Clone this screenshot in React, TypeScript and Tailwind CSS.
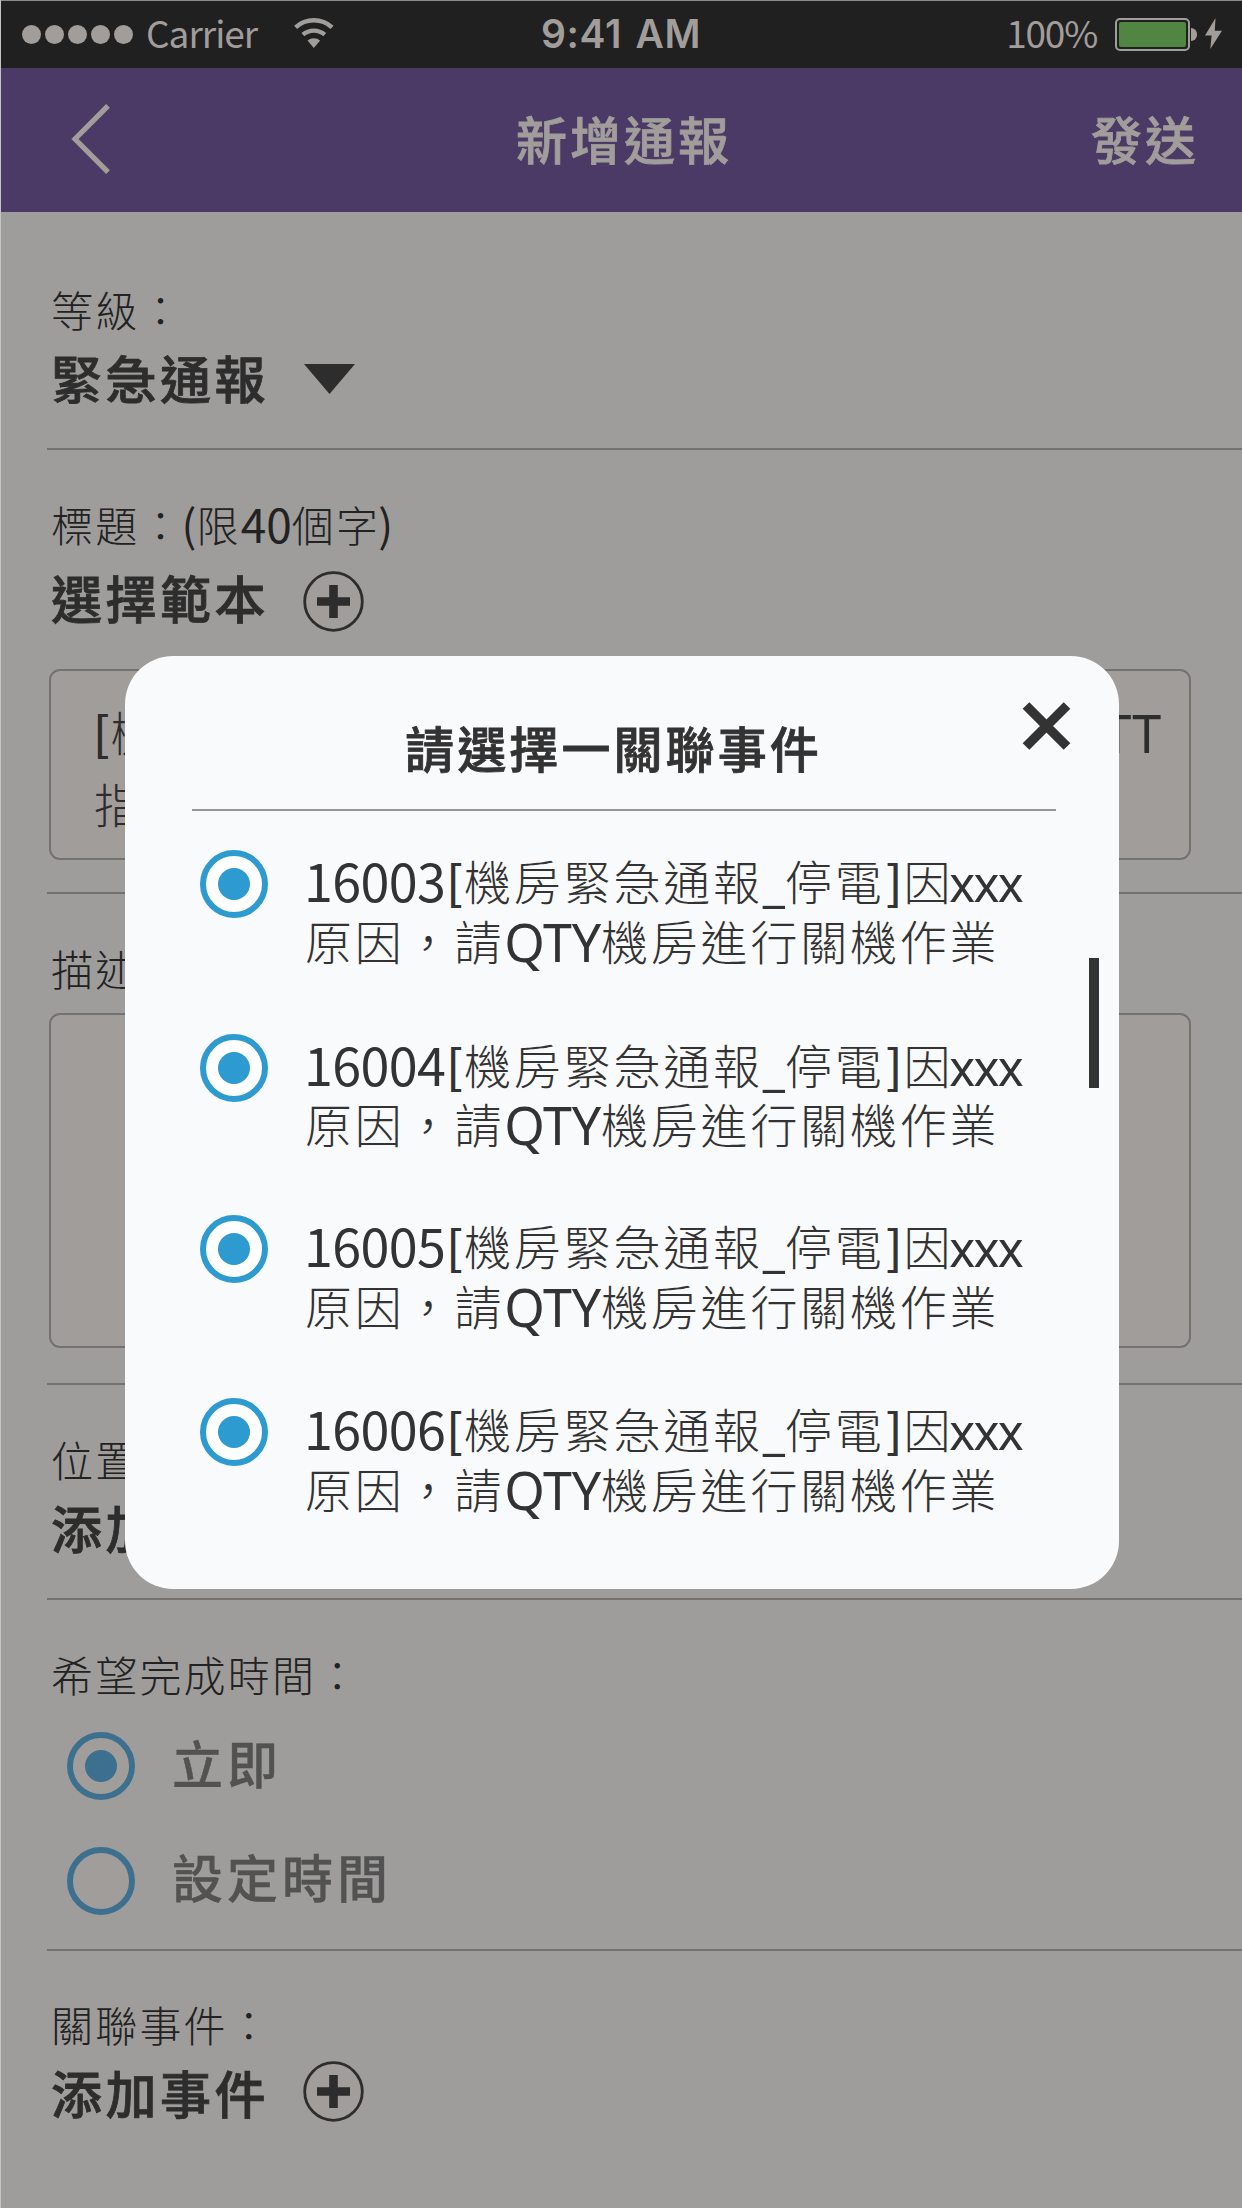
import React from "react";

const cjk = "font-['Noto_Sans_CJK_TC',sans-serif]";

/* Splits a string so that digits and Latin letters get their own size. */
function Mixed({ text, small = false }: { text: string; small?: boolean }) {
  const parts = text.match(/[0-9]+|[A-Z]+|[a-z]+|[\[\]()]|_|[^\x00-\x7f]+/g) ?? [];
  return (
    <>
      {parts.map((p, i) => {
        if (/^[0-9]/.test(p))
          return (
            <span key={i} className={small ? "align-[-1px] text-[46px] font-normal tracking-[0px]" : "align-[-2px] text-[52px] font-normal tracking-[-0.6px]"}>
              {p}
            </span>
          );
        if (/^[A-Z]/.test(p))
          return (
            <span key={i} className="align-[-2px] font-['Noto_Sans',sans-serif] text-[52px] font-normal tracking-[-0.2px]">
              {p}
            </span>
          );
        if (/^[a-z]/.test(p))
          return (
            <span key={i} className="ml-[-4px] align-[-2px] font-['Noto_Sans',sans-serif] text-[49px] font-normal tracking-[-1.600px]">
              {p}
            </span>
          );
        if (p === "_")
          return (
            <span key={i} className="align-[-1px] font-['Noto_Sans',sans-serif] text-[50px] font-normal tracking-[0px]">
              {p}
            </span>
          );
        if (/^[\[\]()]/.test(p))
          return (
            <span key={i} className={small ? "ml-[-2px] text-[44px] font-normal tracking-[0px]" : "px-[1px] text-[47px] font-medium tracking-[0px]"}>
              {p}
            </span>
          );
        return <span key={i}>{p}</span>;
      })}
    </>
  );
}

function Label({ children }: { children: string }) {
  return (
    <div className="h-[60px] pl-[4px] text-[42px] leading-[60px] font-light tracking-[2.2px] whitespace-nowrap text-[#222222]">
      <Mixed text={children} small />
    </div>
  );
}

function Heading({ children, icon }: { children: string; icon: React.ReactNode }) {
  return (
    <div className="flex h-[76px] items-center pl-[4px]">
      <div className="w-[252px] shrink-0 text-[51px] leading-[76px] font-medium tracking-[3.5px] whitespace-nowrap text-[#2d2d2d] [-webkit-text-stroke:0.8px]">{children}</div>
      {icon}
    </div>
  );
}

function PlusCircle() {
  return (
    <svg className="h-[61px] w-[61px] shrink-0" viewBox="0 0 61 61" fill="none">
      <circle cx="30.5" cy="30.5" r="28.8" fill="#a19d9b" stroke="#2d2d2d" strokeWidth="2.8" />
      <path d="M30.5 14v33M14 30.5h33" stroke="#2d2d2d" strokeWidth="8.6" />
    </svg>
  );
}

function Radio({ checked, dim = false }: { checked: boolean; dim?: boolean }) {
  return (
    <span className={`flex size-[68px] shrink-0 items-center justify-center rounded-full border-[6px] ${dim ? "border-[#3d708e] bg-[#a19d9b]" : "border-[#2d9ad0] bg-white"}`}>
      {checked && <span className={`size-[32px] rounded-full ${dim ? "bg-[#3d708e]" : "bg-[#2d9ad0]"}`} />}
    </span>
  );
}

function StatusBar() {
  return (
    <div className="flex h-[68px] items-center border-t border-[#8a8a89] bg-[#202020] text-[#a19d9b]">
      <div className="flex flex-1 items-center">
        <div className="ml-[22px] flex gap-[4px]">
          {[0, 1, 2, 3, 4].map((i) => (
            <span key={i} className="h-[19px] w-[19px] rounded-full bg-[#a19d9b]" />
          ))}
        </div>
        <span className="mb-[5px] ml-[13px] text-[37px] leading-[60px] tracking-[-1px]">Carrier</span>
        <svg className="mb-[3px] ml-[37px] h-[31px] w-[41px]" viewBox="0 0 42 32" fill="none">
          <path d="M1.5 9.6a28 28 0 0 1 37.6 0" stroke="#a19d9b" strokeWidth="4.6" />
          <path d="M9 17.2a17.4 17.4 0 0 1 22.6 0" stroke="#a19d9b" strokeWidth="4.6" />
          <path d="M13.8 23.2a10 10 0 0 1 13 0L20.3 31z" fill="#a19d9b" />
        </svg>
      </div>
      <div className="mb-[2px] font-['Inter',sans-serif] text-[39px] leading-[60px] font-semibold tracking-[0.6px] [word-spacing:3px]">9:41 AM</div>
      <div className="flex flex-1 items-center justify-end">
        <span className="mr-[18px] mb-[5px] text-[37px] leading-[60px] tracking-[-1.200px]">100%</span>
        <span className="h-[33px] w-[75px] rounded-[5px] border-2 border-[#a19d9b] p-[2px]">
          <span className="block h-full rounded-[2px] bg-[#518642]" />
        </span>
        <span className="ml-px h-[13px] w-[6px] rounded-r-full bg-[#a19d9b]" />
        <svg className="mr-[20px] mb-[3px] ml-[8px] h-[31px] w-[17px]" viewBox="0 0 17 31">
          <path d="M10.5 0L0 17.4h6.6L5.3 31 17 12.8h-7.2z" fill="#a19d9b" />
        </svg>
      </div>
    </div>
  );
}

const section = "ml-[47px] border-b-2 border-[#747270]";
const events = ["16003", "16004", "16005", "16006"];

export default function App() {
  return (
    <div className={`relative h-[2208px] w-[1242px] overflow-hidden bg-[#9e9d9b] ${cjk}`} lang="zh-Hant">
      <StatusBar />
      <header className="flex h-[144px] items-center bg-[#4b3a66] pb-[4px] text-[51px] leading-[76px] font-medium tracking-[3px] text-[#a19d9b] [-webkit-text-stroke:0.8px]">
        <div className="flex-1">
          <svg className="mt-[2px] ml-[71px] h-[70px] w-[39px]" viewBox="0 0 39 70" fill="none">
            <path d="M37 1.8L4 35l33 33.2" stroke="#a19d9b" strokeWidth="5.2" />
          </svg>
        </div>
        <h1 className="pl-[6px]">新增通報</h1>
        <div className="flex-1 text-right">
          <span className="mr-[43px]">發送</span>
        </div>
      </header>

      <section className={`${section} h-[238px] pt-[67px]`}>
        <Label>等級：</Label>
        <Heading
          icon={
            <svg className="mt-[3px] ml-[1px] h-[30px] w-[51px]" viewBox="0 0 51 30">
              <path d="M0 0h51L25.500 30z" fill="#2d2d2d" />
            </svg>
          }
        >
          緊急通報
        </Heading>
      </section>

      <section className={`${section} h-[444px] pt-[43px]`}>
        <Label>標題：(限40個字)</Label>
        <div className="mt-[6px]">
          <Heading
            icon={
              <span className="mt-[8px]">
                <PlusCircle />
              </span>
            }
          >
            選擇範本
          </Heading>
        </div>
        <div className="mt-[34px] ml-[2px] h-[191px] w-[1142px] rounded-[11px] border-2 border-[#747270] bg-[#a19d9b] pt-[24px] pr-[28px] pl-[41px] text-[47px] leading-[72px] font-light tracking-[2.7px] text-[#2d2d2d]">
          <div className="flex h-[72px] justify-between">
            <span>
              <Mixed text="[機房緊急通報_停電]" />
            </span>
            <span>
              <Mixed text="TT" />
            </span>
          </div>
          <div className="pl-[2px]">指</div>
        </div>
      </section>

      <section className={`${section} h-[491px] pt-[44px]`}>
        <Label>描述：</Label>
        <div className="mt-[15px] ml-[2px] h-[335px] w-[1142px] rounded-[11px] border-2 border-[#747270] bg-[#a19d9b]" />
      </section>

      <section className={`${section} h-[215px] pt-[44px]`}>
        <Label>位置：</Label>
        <Heading icon={<PlusCircle />}>添加位置</Heading>
      </section>

      <section className={`${section} h-[351px] pt-[44px]`}>
        <Label>希望完成時間：</Label>
        <div className="mt-[28px] flex flex-col gap-[47px] pl-[20px] text-[51px] leading-[68px] font-medium tracking-[4px] text-[#525252] [-webkit-text-stroke:0.4px]">
          <div className="flex h-[68px] items-center gap-[37px]">
            <Radio checked dim />
            <span className="pb-[8px]">立即</span>
          </div>
          <div className="flex h-[68px] items-center gap-[37px]">
            <Radio checked={false} dim />
            <span className="pb-[11px]">設定時間</span>
          </div>
        </div>
      </section>

      <section className="ml-[47px] pt-[43px]">
        <Label>關聯事件：</Label>
        <Heading
          icon={
            <span className="mb-[2px]">
              <PlusCircle />
            </span>
          }
        >
          添加事件
        </Heading>
      </section>

      <div role="dialog" className="absolute top-[656px] left-[125px] h-[933px] w-[994px] rounded-[48px] bg-[#f9fafc] pt-[61px] text-[#333333]">
        <h2 className="pr-[17px] text-center text-[49px] leading-[60px] font-medium tracking-[3.1px] [-webkit-text-stroke:0.8px]">請選擇一關聯事件</h2>
        <div className="mt-[32px] ml-[67px] h-[2px] w-[864px] bg-[#959697]" />
        <ul className="mt-[39px] flex flex-col gap-[63.700px] pl-[75px]">
          {events.map((id) => (
            <li key={id} className="flex h-[119px] gap-[37px] nth-2:translate-y-px">
              <Radio checked />
              <div className="text-[47px] leading-[59.500px] font-light tracking-[2.8px] whitespace-nowrap">
                <div className="ml-[-1px] h-[59.500px]">
                  <Mixed text={`${id}[機房緊急通報_停電]因xxx`} />
                </div>
                <div className="h-[59.500px]">
                  <Mixed text="原因，請QTY機房進行關機作業" />
                </div>
              </div>
            </li>
          ))}
        </ul>
        <svg className="absolute top-[46px] left-[897px] h-[48px] w-[49px]" viewBox="0 0 49 48" fill="none">
          <path d="M4 3.500L45 44.500M45 3.500L4 44.500" stroke="#333333" strokeWidth="9.400" />
        </svg>
        <div className="absolute top-[302px] left-[964px] h-[130px] w-[10px] bg-[#333333]" />
      </div>

      <div className="absolute top-0 left-0 h-full w-px bg-[#c4c4c3]" />
    </div>
  );
}
